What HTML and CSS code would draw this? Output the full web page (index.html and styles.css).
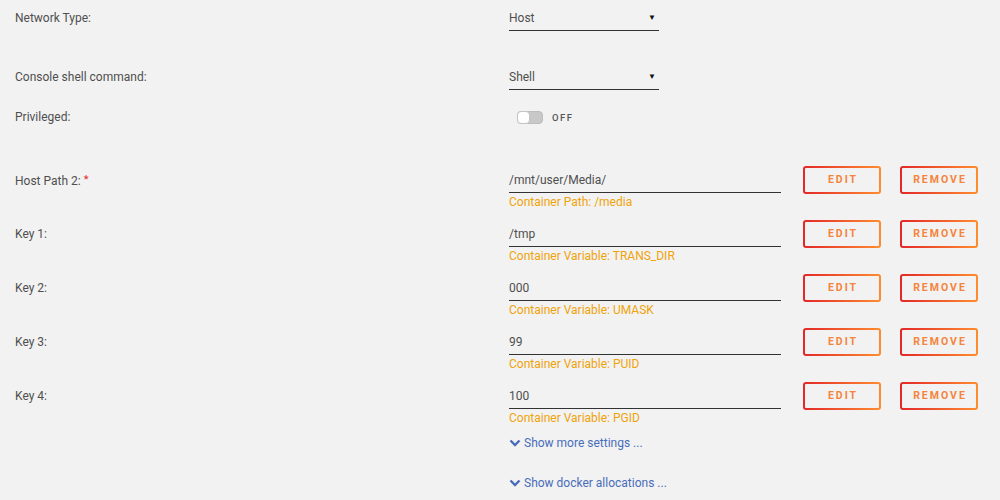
FILE: index.html
```html
<!DOCTYPE html>
<html>
<head>
<meta charset="utf-8">
<link rel="stylesheet" href="styles.css">
</head>
<body>
<div class="form">
  <div class="row row-top row-net">
    <div class="label">Network Type:</div>
    <div class="select"><span>Host</span><span class="caret">&#9660;</span></div>
  </div>
  <div class="row row-top row-console">
    <div class="label">Console shell command:</div>
    <div class="select"><span>Shell</span><span class="caret">&#9660;</span></div>
  </div>
  <div class="row row-top row-priv">
    <div class="label">Privileged:</div>
    <div class="toggle-wrap"><span class="toggle"><span class="knob"></span></span><span class="off">OFF</span></div>
  </div>

  <div class="row row-item">
    <div class="label">Host Path 2: <span class="req">*</span></div>
    <div class="field"><div class="input">/mnt/user/Media/</div><div class="hint">Container Path: /media</div></div>
    <button class="btn btn-edit">EDIT</button>
    <button class="btn btn-remove">REMOVE</button>
  </div>
  <div class="row row-item">
    <div class="label">Key 1:</div>
    <div class="field"><div class="input">/tmp</div><div class="hint">Container Variable: TRANS_DIR</div></div>
    <button class="btn btn-edit">EDIT</button>
    <button class="btn btn-remove">REMOVE</button>
  </div>
  <div class="row row-item">
    <div class="label">Key 2:</div>
    <div class="field"><div class="input">000</div><div class="hint">Container Variable: UMASK</div></div>
    <button class="btn btn-edit">EDIT</button>
    <button class="btn btn-remove">REMOVE</button>
  </div>
  <div class="row row-item">
    <div class="label">Key 3:</div>
    <div class="field"><div class="input">99</div><div class="hint">Container Variable: PUID</div></div>
    <button class="btn btn-edit">EDIT</button>
    <button class="btn btn-remove">REMOVE</button>
  </div>
  <div class="row row-item">
    <div class="label">Key 4:</div>
    <div class="field"><div class="input">100</div><div class="hint">Container Variable: PGID</div></div>
    <button class="btn btn-edit">EDIT</button>
    <button class="btn btn-remove">REMOVE</button>
  </div>

  <div class="link link-more"><svg class="chev" viewBox="0 0 12 8" width="12" height="8"><path d="M1.5 1.5 L6 6 L10.5 1.5" fill="none" stroke="#486dba" stroke-width="2.4"/></svg>Show more settings ...</div>
  <div class="link link-alloc"><svg class="chev" viewBox="0 0 12 8" width="12" height="8"><path d="M1.5 1.5 L6 6 L10.5 1.5" fill="none" stroke="#486dba" stroke-width="2.4"/></svg>Show docker allocations ...</div>
</div>
</body>
</html>
```
FILE: styles.css
```css
html, body {
  margin: 0;
  padding: 0;
  background: #f2f2f2;
}
body {
  font-family: Roboto, "Open Sans", sans-serif;
  font-size: 12px;
  color: #4f4f4f;
  width: 1000px;
  height: 500px;
  overflow: hidden;
}
.row {
  display: flex;
  align-items: flex-start;
}
.label {
  width: 494px;
  padding-left: 15px;
  line-height: 24px;
  flex: none;
}
.row-top {
  padding-top: 6px;
}
.row-net { height: 53px; }
.row-console { height: 34px; }
.row-priv { height: 61px; }
.row-item {
  height: 54px;
}
.row-item .label {
  padding-top: 2px;
}
.req {
  color: #e22828;
  font-size: 11px;
  vertical-align: 2px;
}
.select {
  width: 150px;
  line-height: 24px;
  border-bottom: 1px solid #333;
  display: flex;
  justify-content: space-between;
  align-items: center;
}
.caret {
  font-size: 8px;
  color: #111;
  margin-right: 3px;
}
.toggle-wrap {
  display: flex;
  align-items: center;
  height: 24px;
  padding-left: 8px;
}
.toggle {
  width: 24px;
  height: 11px;
  border-radius: 4px;
  background: #c8c8c8;
  border: 1px solid #bdbdbd;
  position: relative;
  display: inline-block;
}
.knob {
  position: absolute;
  left: -1px;
  top: -1px;
  width: 11px;
  height: 11px;
  border-radius: 4px;
  background: #fff;
  border: 1px solid #c4c4c4;
}
.off {
  margin-left: 9px;
  font-size: 9.5px;
  font-weight: 500;
  letter-spacing: 1.5px;
  color: #555;
}
.field {
  width: 272px;
  flex: none;
}
.input {
  line-height: 24px;
  padding-top: 2px;
  border-bottom: 1px solid #333;
}
.hint {
  color: #f0a30a;
  line-height: 16px;
  padding-top: 1px;
}
.btn {
  flex: none;
  width: 78px;
  height: 28px;
  border: 2px solid transparent;
  border-radius: 3px;
  background: linear-gradient(#f2f2f2, #f2f2f2) padding-box,
              linear-gradient(90deg, #e22828, #ff8c2f) border-box;
  color: #f5843c;
  font-family: Roboto, "Open Sans", sans-serif;
  font-size: 10.5px;
  font-weight: 700;
  letter-spacing: 2px;
  padding: 0 0 0 2px;
  text-align: center;
  line-height: 24px;
}
.btn-edit {
  margin-left: 22px;
}
.btn-remove {
  margin-left: 19px;
}
.link {
  margin-left: 509px;
  color: #486dba;
  line-height: 16px;
  display: flex;
  align-items: center;
}
.link-more {
  margin-top: -1px;
}
.link-alloc {
  margin-top: 24px;
}
.chev {
  margin-right: 3px;
}
```
